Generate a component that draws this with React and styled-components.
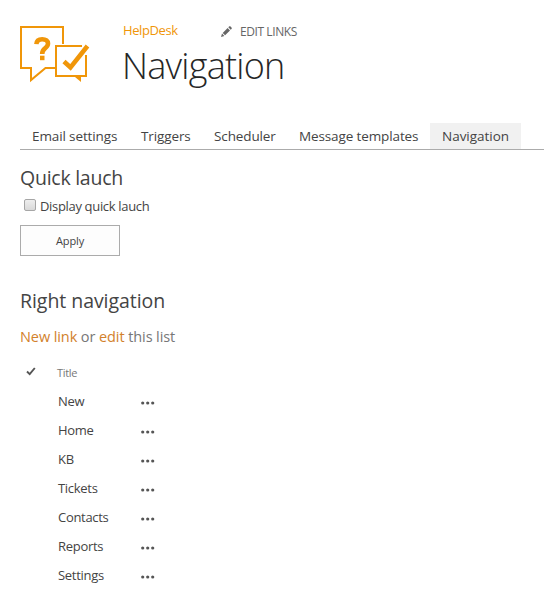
import React from "react";
import styled, { createGlobalStyle } from "styled-components";

const Global = createGlobalStyle`
  * { box-sizing: border-box; }
  body { margin: 0; background: #fff; color: #444; font-family: "Open Sans", "Noto Sans", sans-serif; font-size: 13px; }
`;

const Page = styled.main`
  width: 544px;
  height: 592px;
  overflow: hidden;
  padding-left: 20px;
`;

const Header = styled.header`
  display: flex;
  height: 123px;
  padding-top: 20px;
`;

const Logo = styled.svg`
  width: 70px;
  height: 60px;
  margin-top: 4px;
  flex: none;
`;

const Heading = styled.div`
  margin-left: 33px;
`;

const TopLinks = styled.div`
  display: flex;
  align-items: center;
  height: 22px;
`;

const SiteLink = styled.a`
  width: 98px;
  padding-bottom: 2px;
  color: #f09609;
  letter-spacing: -0.4px;
`;

const EditLinks = styled.a`
  display: flex;
  align-items: center;
  gap: 8px;
  color: #666;
  font-size: 12px;
  letter-spacing: -0.42px;
  white-space: nowrap;
`;

const PageTitle = styled.h1`
  margin: 0 0 0 -1px;
  font-size: 36px;
  font-weight: 300;
  line-height: 48px;
  letter-spacing: -0.75px;
  color: #262626;
`;

const Tabs = styled.nav`
  display: flex;
  height: 27px;
  border-bottom: 1px solid #ababab;
`;

const Tab = styled.a`
  width: ${(p) => p.$width}px;
  padding-left: 12px;
  line-height: 26px;
  font-size: 13.5px;
  letter-spacing: ${(p) => p.$spacing}px;
  white-space: nowrap;
  background: ${(p) => (p.$active ? "#f1f1f1" : "transparent")};
`;

const SectionTitle = styled.h2`
  margin: ${(p) => p.$top}px 0 0;
  font-size: 19.5px;
  font-weight: 400;
  line-height: 28px;
  letter-spacing: ${(p) => p.$spacing}px;
`;

const CheckRow = styled.label`
  display: flex;
  align-items: center;
  height: 20px;
  margin-top: 4px;
  padding-left: 4px;
  gap: 4px;
  letter-spacing: -0.33px;
`;

const Checkbox = styled.input`
  appearance: none;
  width: 12px;
  height: 12px;
  margin: -2px 0 0;
  border: 1px solid #a6a6a6;
  border-radius: 2px;
  background: linear-gradient(#eee, #d9d9d9);
`;

const Button = styled.button`
  display: block;
  width: 100px;
  height: 31px;
  margin-top: 9px;
  padding: 0;
  border: 1px solid #ababab;
  background: #fdfdfd;
  color: #444;
  font-family: inherit;
  font-size: 11px;
  letter-spacing: -0.1px;
`;

const ListHint = styled.p`
  margin: 11px 0 0;
  font-size: 14.5px;
  line-height: 22px;
  letter-spacing: -0.09px;
  color: #777;
`;

const Accent = styled.a`
  color: #d2812c;
`;

const Row = styled.div`
  display: grid;
  grid-template-columns: 38px 83px 20px;
  align-items: center;
  height: 29px;
  letter-spacing: -0.3px;
`;

const HeadRow = styled(Row)`
  grid-template-columns: 37px 84px 20px;
  height: 27px;
  margin-top: 11px;
  color: #777;
  font-size: 11px;
`;

const Name = styled.span`
  grid-column: 2;
`;

const Dots = styled.svg`
  width: 14px;
  height: 4px;
  margin-top: 4px;
  fill: #555;
`;

const Tick = styled.svg`
  width: 10px;
  height: 9px;
  margin: -2px 0 0 6px;
`;

const tabs = [
  { label: "Email settings", width: 109, spacing: -0.12 },
  { label: "Triggers", width: 73, spacing: -0.12 },
  { label: "Scheduler", width: 85, spacing: -0.12 },
  { label: "Message templates", width: 143, spacing: -0.12 },
  { label: "Navigation", width: 91, spacing: -0.02, active: true },
];

const items = ["New", "Home", "KB", "Tickets", "Contacts", "Reports", "Settings"];

export default function App() {
  return (
    <Page>
      <Global />
      <Header>
        <Logo viewBox="0 0 70 60" fill="none" stroke="#f09609" strokeWidth="2">
          <path d="M43 20V3H1V44H11V56L25.500 44H35" />
          <path d="M62 22H36V52H66V31" />
          <path d="M55 53H61V58Z" fill="#f09609" stroke="none" />
          <path d="M44 37.500L50.500 43.500L67.500 22" strokeWidth="4.600" />
          <path d="M16.400 20.200C16.600 16.800 18.700 15.200 22.200 15.200C25.800 15.200 28 16.900 28 19.600C28 21.800 26.900 22.900 25 24.300C23 25.800 22.200 26.800 22.200 30" strokeWidth="4.600" />
          <path d="M20 31.700H24.500V36.200H20Z" fill="#f09609" stroke="none" />
        </Logo>
        <Heading>
          <TopLinks>
            <SiteLink>HelpDesk</SiteLink>
            <EditLinks>
              <svg width="11" height="11" viewBox="0 0 11 11" fill="#666">
                <path d="M0 11L1 7.600L3.400 10ZM1.700 6.900L6.600 2L9 4.400L4.100 9.300ZM7.300 1.300L8.300.3Q9 0 9.600.5L10.500 1.400Q11 2 10.700 2.700L9.700 3.700Z" />
              </svg>
              EDIT LINKS
            </EditLinks>
          </TopLinks>
          <PageTitle>Navigation</PageTitle>
        </Heading>
      </Header>
      <Tabs>
        {tabs.map((t) => (
          <Tab key={t.label} $width={t.width} $spacing={t.spacing} $active={t.active}>
            {t.label}
          </Tab>
        ))}
      </Tabs>
      <SectionTitle $top={14} $spacing={-0.25}>Quick lauch</SectionTitle>
      <CheckRow>
        <Checkbox type="checkbox" />
        Display quick lauch
      </CheckRow>
      <Button>Apply</Button>
      <SectionTitle $top={31} $spacing={-0.05}>Right navigation</SectionTitle>
      <ListHint>
        <Accent>New link</Accent> or <Accent>edit</Accent> this list
      </ListHint>
      <HeadRow>
        <Tick viewBox="0 0 10 9" fill="none" stroke="#555" strokeWidth="1.900">
          <path d="M1 4.500L3.700 7.200L8.800 1" />
        </Tick>
        <Name>Title</Name>
      </HeadRow>
      {items.map((item) => (
        <Row key={item}>
          <Name>{item}</Name>
          <Dots viewBox="0 0 14 4">
            <circle cx="1.700" cy="2" r="1.600" />
            <circle cx="6.700" cy="2" r="1.600" />
            <circle cx="11.700" cy="2" r="1.600" />
          </Dots>
        </Row>
      ))}
    </Page>
  );
}
